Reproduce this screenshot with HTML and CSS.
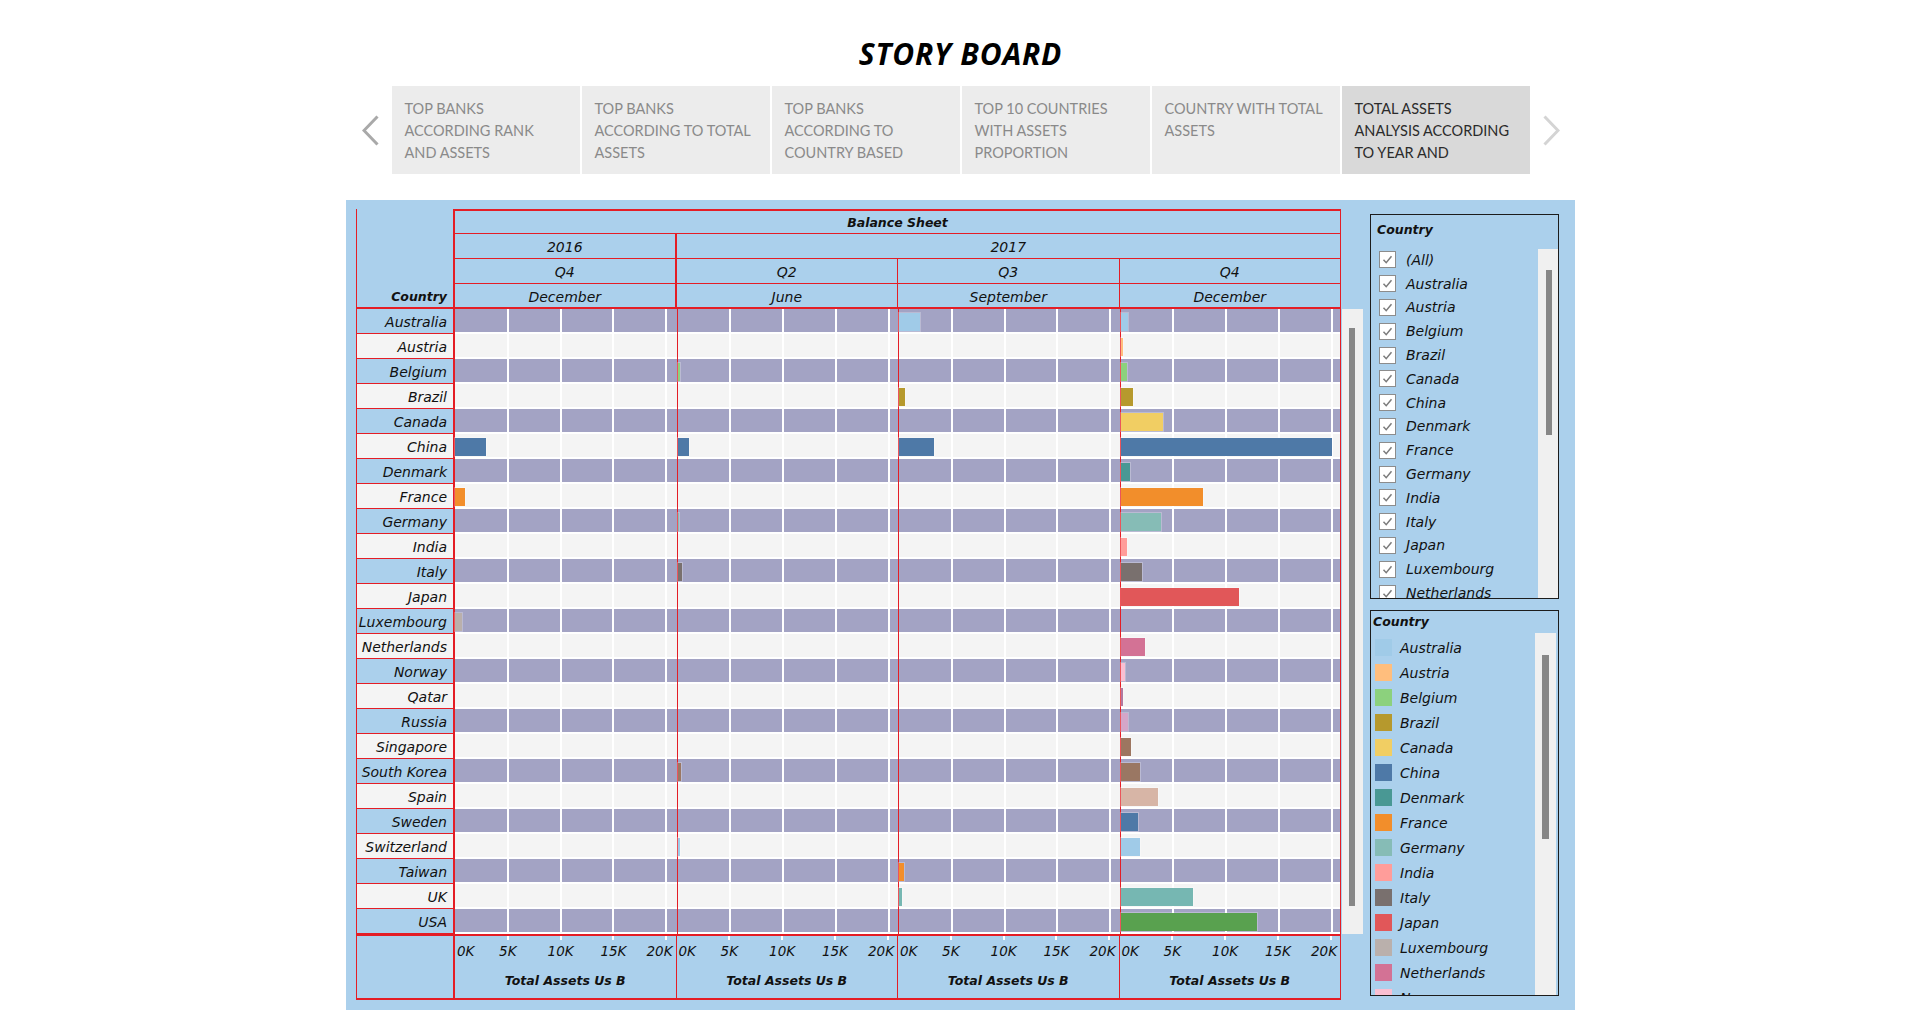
FILE: index.html
```html
<!DOCTYPE html>
<html>
<head>
<meta charset="utf-8">
<title>Story Board</title>
<link rel="stylesheet" href="styles.css">
</head>
<body>
<div class="page">
  <h1 class="title">STORY BOARD</h1>
  <div class="tabbar">
    <svg class="arrow" width="17" height="31" viewBox="0 0 17 31"><polyline points="15.5,1.5 2,15.5 15.5,29.5" fill="none" stroke="#a9a9a9" stroke-width="3"/></svg>
    <div class="tabs">
      <div class="tab">TOP BANKS<br>ACCORDING RANK<br>AND ASSETS</div>
      <div class="tab">TOP BANKS<br>ACCORDING TO TOTAL<br>ASSETS</div>
      <div class="tab">TOP BANKS<br>ACCORDING TO<br>COUNTRY BASED</div>
      <div class="tab">TOP 10 COUNTRIES<br>WITH ASSETS<br>PROPORTION</div>
      <div class="tab">COUNTRY WITH TOTAL<br>ASSETS</div>
      <div class="tab active">TOTAL ASSETS<br>ANALYSIS ACCORDING<br>TO YEAR AND</div>
    </div>
    <svg class="arrow" width="17" height="31" viewBox="0 0 17 31"><polyline points="1.5,1.5 15,15.5 1.5,29.5" fill="none" stroke="#d4d4d4" stroke-width="3"/></svg>
  </div>

  <div class="dash">
    <div class="viz">
      <div class="chart">
        <div class="hdr">
          <div class="corner">Country</div>
          <div class="h bs">Balance Sheet</div>
          <div class="h y16">2016</div>
          <div class="h y17">2017</div>
          <div class="h q1">Q4</div>
          <div class="h">Q2</div>
          <div class="h">Q3</div>
          <div class="h">Q4</div>
          <div class="h m m1">December</div>
          <div class="h m">June</div>
          <div class="h m">September</div>
          <div class="h m">December</div>
        </div>

        <div class="row b australia"><div class="lbl">Australia</div><div class="p"></div><div class="p"></div><div class="p"><i style="width:20.6px"></i></div><div class="p"><i style="width:7.7px"></i></div></div>
        <div class="row austria"><div class="lbl">Austria</div><div class="p"></div><div class="p"></div><div class="p"></div><div class="p"><i style="width:2.7px"></i></div></div>
        <div class="row b belgium"><div class="lbl">Belgium</div><div class="p"></div><div class="p"><i style="width:2.3px"></i></div><div class="p"></div><div class="p"><i style="width:6.7px"></i></div></div>
        <div class="row brazil"><div class="lbl">Brazil</div><div class="p"></div><div class="p"></div><div class="p"><i style="width:6px"></i></div><div class="p"><i style="width:12.7px"></i></div></div>
        <div class="row b canada"><div class="lbl">Canada</div><div class="p"></div><div class="p"></div><div class="p"></div><div class="p"><i style="width:42.7px"></i></div></div>
        <div class="row china"><div class="lbl">China</div><div class="p"><i style="width:31px"></i></div><div class="p"><i style="width:11px"></i></div><div class="p"><i style="width:35.3px"></i></div><div class="p"><i style="width:211.7px"></i></div></div>
        <div class="row b denmark"><div class="lbl">Denmark</div><div class="p"></div><div class="p"></div><div class="p"></div><div class="p"><i style="width:9px"></i></div></div>
        <div class="row france"><div class="lbl">France</div><div class="p"><i style="width:10px"></i></div><div class="p"></div><div class="p"></div><div class="p"><i style="width:82.7px"></i></div></div>
        <div class="row b germany"><div class="lbl">Germany</div><div class="p"></div><div class="p"><i style="width:1px"></i></div><div class="p"></div><div class="p"><i style="width:40.7px"></i></div></div>
        <div class="row india"><div class="lbl">India</div><div class="p"></div><div class="p"></div><div class="p"></div><div class="p"><i style="width:6.7px"></i></div></div>
        <div class="row b italy"><div class="lbl">Italy</div><div class="p"></div><div class="p"><i style="width:4.7px"></i></div><div class="p"></div><div class="p"><i style="width:21.7px"></i></div></div>
        <div class="row japan"><div class="lbl">Japan</div><div class="p"></div><div class="p"></div><div class="p"></div><div class="p"><i style="width:118px"></i></div></div>
        <div class="row b luxembourg"><div class="lbl">Luxembourg</div><div class="p"><i style="width:7px"></i></div><div class="p"></div><div class="p"></div><div class="p"></div></div>
        <div class="row netherlands"><div class="lbl">Netherlands</div><div class="p"></div><div class="p"></div><div class="p"></div><div class="p"><i style="width:24px"></i></div></div>
        <div class="row b norway"><div class="lbl">Norway</div><div class="p"></div><div class="p"></div><div class="p"></div><div class="p"><i style="width:4px"></i></div></div>
        <div class="row qatar"><div class="lbl">Qatar</div><div class="p"></div><div class="p"></div><div class="p"></div><div class="p"><i style="width:2.7px"></i></div></div>
        <div class="row b russia"><div class="lbl">Russia</div><div class="p"></div><div class="p"></div><div class="p"></div><div class="p"><i style="width:7.7px"></i></div></div>
        <div class="row singapore"><div class="lbl">Singapore</div><div class="p"></div><div class="p"></div><div class="p"></div><div class="p"><i style="width:10.3px"></i></div></div>
        <div class="row b skorea"><div class="lbl">South Korea</div><div class="p"></div><div class="p"><i style="width:3.3px"></i></div><div class="p"></div><div class="p"><i style="width:19px"></i></div></div>
        <div class="row spain"><div class="lbl">Spain</div><div class="p"></div><div class="p"></div><div class="p"></div><div class="p"><i style="width:37.7px"></i></div></div>
        <div class="row b sweden"><div class="lbl">Sweden</div><div class="p"></div><div class="p"></div><div class="p"></div><div class="p"><i style="width:17.7px"></i></div></div>
        <div class="row switzerland"><div class="lbl">Switzerland</div><div class="p"></div><div class="p"><i style="width:2.3px"></i></div><div class="p"></div><div class="p"><i style="width:19px"></i></div></div>
        <div class="row b taiwan"><div class="lbl">Taiwan</div><div class="p"></div><div class="p"></div><div class="p"><i style="width:4.7px"></i></div><div class="p"></div></div>
        <div class="row uk"><div class="lbl">UK</div><div class="p"></div><div class="p"></div><div class="p"><i style="width:3.3px"></i></div><div class="p"><i style="width:72.7px"></i></div></div>
        <div class="row b usa"><div class="lbl">USA</div><div class="p"></div><div class="p"></div><div class="p"></div><div class="p"><i style="width:136.7px"></i></div></div>

        <div class="axis">
          <div class="acorner"></div>
          <div class="ap"><div class="ticks"><span class="t0">0K</span><span class="t5">5K</span><span class="t10">10K</span><span class="t15">15K</span><span class="t20">20K</span></div><div class="atitle">Total Assets Us B</div></div>
          <div class="ap"><div class="ticks"><span class="t0">0K</span><span class="t5">5K</span><span class="t10">10K</span><span class="t15">15K</span><span class="t20">20K</span></div><div class="atitle">Total Assets Us B</div></div>
          <div class="ap"><div class="ticks"><span class="t0">0K</span><span class="t5">5K</span><span class="t10">10K</span><span class="t15">15K</span><span class="t20">20K</span></div><div class="atitle">Total Assets Us B</div></div>
          <div class="ap"><div class="ticks"><span class="t0">0K</span><span class="t5">5K</span><span class="t10">10K</span><span class="t15">15K</span><span class="t20">20K</span></div><div class="atitle">Total Assets Us B</div></div>
        </div>
      </div>
      <div class="vscroll"><div class="vthumb"></div></div>
    </div>

    <div class="side">
      <div class="filter">
        <div class="ftitle">Country</div>
        <div class="fbody">
          <div class="flist">
            <div class="fitem"><span class="cb"><svg viewBox="0 0 15 15"><path d="M3.5 7.8l2.7 2.9 5.3-6.4" fill="none" stroke="#7b7b7b" stroke-width="1.5"/></svg></span>(All)</div>
            <div class="fitem"><span class="cb"><svg viewBox="0 0 15 15"><path d="M3.5 7.8l2.7 2.9 5.3-6.4" fill="none" stroke="#7b7b7b" stroke-width="1.5"/></svg></span>Australia</div>
            <div class="fitem"><span class="cb"><svg viewBox="0 0 15 15"><path d="M3.5 7.8l2.7 2.9 5.3-6.4" fill="none" stroke="#7b7b7b" stroke-width="1.5"/></svg></span>Austria</div>
            <div class="fitem"><span class="cb"><svg viewBox="0 0 15 15"><path d="M3.5 7.8l2.7 2.9 5.3-6.4" fill="none" stroke="#7b7b7b" stroke-width="1.5"/></svg></span>Belgium</div>
            <div class="fitem"><span class="cb"><svg viewBox="0 0 15 15"><path d="M3.5 7.8l2.7 2.9 5.3-6.4" fill="none" stroke="#7b7b7b" stroke-width="1.5"/></svg></span>Brazil</div>
            <div class="fitem"><span class="cb"><svg viewBox="0 0 15 15"><path d="M3.5 7.8l2.7 2.9 5.3-6.4" fill="none" stroke="#7b7b7b" stroke-width="1.5"/></svg></span>Canada</div>
            <div class="fitem"><span class="cb"><svg viewBox="0 0 15 15"><path d="M3.5 7.8l2.7 2.9 5.3-6.4" fill="none" stroke="#7b7b7b" stroke-width="1.5"/></svg></span>China</div>
            <div class="fitem"><span class="cb"><svg viewBox="0 0 15 15"><path d="M3.5 7.8l2.7 2.9 5.3-6.4" fill="none" stroke="#7b7b7b" stroke-width="1.5"/></svg></span>Denmark</div>
            <div class="fitem"><span class="cb"><svg viewBox="0 0 15 15"><path d="M3.5 7.8l2.7 2.9 5.3-6.4" fill="none" stroke="#7b7b7b" stroke-width="1.5"/></svg></span>France</div>
            <div class="fitem"><span class="cb"><svg viewBox="0 0 15 15"><path d="M3.5 7.8l2.7 2.9 5.3-6.4" fill="none" stroke="#7b7b7b" stroke-width="1.5"/></svg></span>Germany</div>
            <div class="fitem"><span class="cb"><svg viewBox="0 0 15 15"><path d="M3.5 7.8l2.7 2.9 5.3-6.4" fill="none" stroke="#7b7b7b" stroke-width="1.5"/></svg></span>India</div>
            <div class="fitem"><span class="cb"><svg viewBox="0 0 15 15"><path d="M3.5 7.8l2.7 2.9 5.3-6.4" fill="none" stroke="#7b7b7b" stroke-width="1.5"/></svg></span>Italy</div>
            <div class="fitem"><span class="cb"><svg viewBox="0 0 15 15"><path d="M3.5 7.8l2.7 2.9 5.3-6.4" fill="none" stroke="#7b7b7b" stroke-width="1.5"/></svg></span>Japan</div>
            <div class="fitem"><span class="cb"><svg viewBox="0 0 15 15"><path d="M3.5 7.8l2.7 2.9 5.3-6.4" fill="none" stroke="#7b7b7b" stroke-width="1.5"/></svg></span>Luxembourg</div>
            <div class="fitem"><span class="cb"><svg viewBox="0 0 15 15"><path d="M3.5 7.8l2.7 2.9 5.3-6.4" fill="none" stroke="#7b7b7b" stroke-width="1.5"/></svg></span>Netherlands</div>
          </div>
          <div class="ftrack"><div class="fthumb"></div></div>
        </div>
      </div>

      <div class="legend">
        <div class="ltitle">Country</div>
        <div class="lbody">
          <div class="llist">
            <div class="litem australia"><span class="sw"></span>Australia</div>
            <div class="litem austria"><span class="sw"></span>Austria</div>
            <div class="litem belgium"><span class="sw"></span>Belgium</div>
            <div class="litem brazil"><span class="sw"></span>Brazil</div>
            <div class="litem canada"><span class="sw"></span>Canada</div>
            <div class="litem china"><span class="sw"></span>China</div>
            <div class="litem denmark"><span class="sw"></span>Denmark</div>
            <div class="litem france"><span class="sw"></span>France</div>
            <div class="litem germany"><span class="sw"></span>Germany</div>
            <div class="litem india"><span class="sw"></span>India</div>
            <div class="litem italy"><span class="sw"></span>Italy</div>
            <div class="litem japan"><span class="sw"></span>Japan</div>
            <div class="litem luxembourg"><span class="sw"></span>Luxembourg</div>
            <div class="litem netherlands"><span class="sw"></span>Netherlands</div>
            <div class="litem norway"><span class="sw"></span>Norway</div>
          </div>
          <div class="ltrack"><div class="lthumb"></div></div>
        </div>
      </div>
    </div>
  </div>
</div>
</body>
</html>
```

FILE: styles.css
```css
* { box-sizing: border-box; }

:root {
  --red: #e41d25;
  --blue: #abd0ec;
  --band: #a3a3c4;
  --light: #f4f4f4;
}

body {
  margin: 0;
  background: #fff;
  font-family: "DejaVu Sans", Verdana, sans-serif;
  color: #111;
}

.page {
  width: 1229px;
  margin-left: 346px;
}

/* title */
.title {
  margin: 0;
  height: 86px;
  padding-top: 37px;
  text-align: center;
  font: italic 700 30px/33px "Open Sans", sans-serif;
  letter-spacing: 0.8px;
  color: #000;
}

/* story tabs */
.tabbar {
  height: 88px;
  display: flex;
  align-items: center;
  justify-content: center;
  gap: 13px;
}
.arrow { flex: none; display: block; }
.tabs {
  display: flex;
  gap: 2px;
  height: 88px;
}
.tab {
  width: 188px;
  height: 88px;
  background: #ececec;
  color: #8a8a8a;
  font: 400 14.5px/22px Lato, sans-serif;
  padding: 12px 8px 0 13px;
  white-space: nowrap;
  overflow: hidden;
}
.tab.active {
  background: #d9d9d9;
  color: #2b2b2b;
}

/* dashboard */
.dash {
  margin-top: 26px;
  height: 810px;
  background: var(--blue);
  display: flex;
  padding: 9px 0 0 10px;
}
.viz { display: flex; }
.chart { width: 985px; }

.hdr {
  display: grid;
  grid-template-columns: 99px repeat(4, 221.5px);
  grid-template-rows: repeat(4, 25px);
}
.corner {
  grid-row: 1 / 5;
  grid-column: 1;
  border-left: 1px solid var(--red);
  border-right: 2px solid var(--red);
  border-bottom: 2px solid var(--red);
  display: flex;
  align-items: flex-end;
  justify-content: flex-end;
  padding: 0 6px 2px 0;
  font: italic 700 12.5px/16px "DejaVu Sans", sans-serif;
}
.h {
  display: flex;
  align-items: center;
  justify-content: center;
  padding-top: 2px;
  border-right: 1px solid var(--red);
  border-bottom: 1px solid var(--red);
  font: italic 400 14px/16px "DejaVu Sans", sans-serif;
}
.h.bs {
  grid-column: 2 / 6;
  border-top: 2px solid var(--red);
  font: italic 700 12.5px/16px "DejaVu Sans", sans-serif;
}
.h.y16 { grid-column: 2; border-right-width: 2px; }
.h.y17 { grid-column: 3 / 6; }
.h.q1 { border-right-width: 2px; }
.h.m1 { border-right-width: 2px; }
.h.m { border-bottom-width: 2px; }

/* data rows */
.row {
  display: grid;
  grid-template-columns: 99px repeat(4, 221.5px);
  height: 25px;
  --bg: var(--light);
  --lb: var(--light);
}
.row.b {
  --bg: var(--band);
  --lb: var(--blue);
}
.lbl {
  background: var(--lb);
  border-left: 1px solid var(--red);
  border-right: 2px solid var(--red);
  border-bottom: 1px solid var(--red);
  text-align: right;
  padding: 1px 6px 0 0;
  font: italic 400 14px/24px "DejaVu Sans", sans-serif;
  white-space: nowrap;
  overflow: hidden;
}
.p {
  background:
    linear-gradient(#fff, #fff) 0 100% / 100% 2px no-repeat,
    linear-gradient(#fff, #fff) 51.8px 0 / 2px 100% no-repeat,
    linear-gradient(#fff, #fff) 104.6px 0 / 2px 100% no-repeat,
    linear-gradient(#fff, #fff) 157.4px 0 / 2px 100% no-repeat,
    linear-gradient(#fff, #fff) 210.2px 0 / 2px 100% no-repeat,
    var(--bg);
}
.p + .p { border-left: 1px solid var(--red); }
.p:last-child { border-right: 1px solid var(--red); }
.p i {
  display: block;
  margin-top: 4px;
  height: 18px;
  background: var(--c);
  box-shadow: 0 0 0 1px rgba(255, 255, 255, 0.25);
}

/* axis */
.axis {
  display: grid;
  grid-template-columns: 99px repeat(4, 221.5px);
  height: 66px;
}
.acorner {
  border: 2px solid var(--red);
  border-left-width: 1px;
}
.ap {
  border-top: 2px solid var(--red);
  border-right: 1px solid var(--red);
  border-bottom: 2px solid var(--red);
  background:
    linear-gradient(#fff, #fff) 51.8px 0 / 2px 4px no-repeat,
    linear-gradient(#fff, #fff) 104.6px 0 / 2px 4px no-repeat,
    linear-gradient(#fff, #fff) 157.4px 0 / 2px 4px no-repeat,
    linear-gradient(#fff, #fff) 210.2px 0 / 2px 4px no-repeat;
}
.ticks {
  position: relative;
  height: 30px;
  font: italic 400 13.5px/16px "DejaVu Sans", sans-serif;
}
.ticks span { position: absolute; top: 7px; }
.t0 { left: 2px; }
.t5 { left: 52.8px; transform: translateX(-50%); }
.t10 { left: 105.6px; transform: translateX(-50%); }
.t15 { left: 158.4px; transform: translateX(-50%); }
.t20 { right: 3px; }
.atitle {
  text-align: center;
  padding-top: 7px;
  font: italic 700 12.5px/16px "DejaVu Sans", sans-serif;
}

.vscroll {
  width: 21px;
  height: 625px;
  margin: 100px 0 0 1px;
  background: #f0f0f0;
  padding-top: 19px;
}
.vthumb {
  width: 6px;
  height: 578px;
  margin-left: 7px;
  background: #878787;
}

/* side panel */
.side {
  width: 189px;
  margin: 5px 0 0 7px;
}
.filter {
  height: 385px;
  border: 1px solid #1c1c1c;
  display: flex;
  flex-direction: column;
}
.ftitle {
  padding: 5px 0 0 6px;
  font: italic 700 12.5px/20px "DejaVu Sans", sans-serif;
}
.fbody {
  flex: 1;
  min-height: 0;
  display: flex;
  margin-top: 8px;
}
.flist {
  flex: 1;
  overflow: hidden;
  padding-left: 8px;
}
.fitem {
  height: 23.8px;
  display: flex;
  align-items: center;
  gap: 10px;
  font: italic 400 14px/18px "DejaVu Sans", sans-serif;
  white-space: nowrap;
}
.cb {
  flex: none;
  width: 17px;
  height: 17px;
  border: 1px solid #8c8c8c;
  background: #fff;
  display: flex;
}
.cb svg { width: 15px; height: 15px; }
.ftrack {
  width: 20px;
  margin-top: 1px;
  background: #f0f0f0;
  padding-top: 21px;
}
.fthumb {
  width: 6px;
  height: 165px;
  margin-left: 8px;
  background: #878787;
}

.legend {
  margin-top: 11px;
  height: 386px;
  border: 1px solid #1c1c1c;
  display: flex;
  flex-direction: column;
}
.ltitle {
  padding: 1px 0 0 2px;
  font: italic 700 12.5px/20px "DejaVu Sans", sans-serif;
}
.lbody {
  flex: 1;
  min-height: 0;
  display: flex;
}
.llist {
  flex: 1;
  overflow: hidden;
  padding: 3px 0 0 4px;
}
.litem {
  height: 25px;
  display: flex;
  align-items: center;
  gap: 8px;
  font: italic 400 14px/18px "DejaVu Sans", sans-serif;
  white-space: nowrap;
}
.sw {
  flex: none;
  width: 17px;
  height: 17px;
  background: var(--c);
}
.ltrack {
  width: 21px;
  margin: 1px 2px 0 0;
  background: #f0f0f0;
  padding-top: 22px;
}
.lthumb {
  width: 7px;
  height: 184px;
  margin-left: 7px;
  background: #878787;
}

/* country colours */
.australia { --c: #a0cbe8; }
.austria { --c: #ffbe7d; }
.belgium { --c: #8cd17d; }
.brazil { --c: #b6992d; }
.canada { --c: #f1ce63; }
.china { --c: #4e79a7; }
.denmark { --c: #499894; }
.france { --c: #f28e2b; }
.germany { --c: #86bcb6; }
.india { --c: #ff9d9a; }
.italy { --c: #79706e; }
.japan { --c: #e15759; }
.luxembourg { --c: #bab0ac; }
.netherlands { --c: #d37295; }
.norway { --c: #fabfd2; }
.qatar { --c: #b07aa1; }
.russia { --c: #d4a6c8; }
.singapore { --c: #9d7660; }
.skorea { --c: #9a7763; }
.spain { --c: #d7b5a6; }
.sweden { --c: #4e79a7; }
.switzerland { --c: #a0cbe8; }
.taiwan { --c: #f28e2b; }
.uk { --c: #76b7b2; }
.usa { --c: #59a14f; }
```
